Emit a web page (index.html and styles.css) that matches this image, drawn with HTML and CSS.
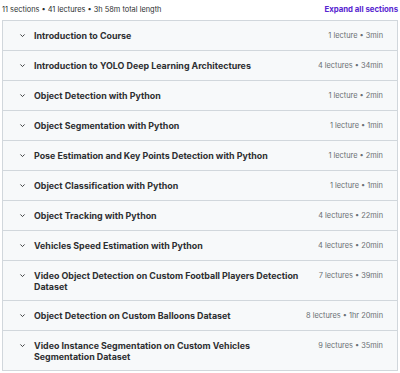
FILE: index.html
```html
<!DOCTYPE html>
<html lang="en">
<head>
    <meta charset="UTF-8">
    <title>Course content</title>
    <link rel="stylesheet" href="styles.css">
</head>
<body>
    <div class="curriculum">
        <div class="curriculum-header">
            <span class="summary">11 sections • 41 lectures • 3h 58m total length</span>
            <button class="expand-all">Expand all sections</button>
        </div>

        <div class="sections">
            <div class="section">
                <span class="chevron"><svg viewBox="0 0 10 10"><path d="M2 3.5 L5 6.5 L8 3.5"/></svg></span>
                <span class="section-title">Introduction to Course</span>
                <span class="section-meta">1 lecture • 3min</span>
            </div>
            <div class="section">
                <span class="chevron"><svg viewBox="0 0 10 10"><path d="M2 3.5 L5 6.5 L8 3.5"/></svg></span>
                <span class="section-title">Introduction to YOLO Deep Learning Architectures</span>
                <span class="section-meta">4 lectures • 34min</span>
            </div>
            <div class="section">
                <span class="chevron"><svg viewBox="0 0 10 10"><path d="M2 3.5 L5 6.5 L8 3.5"/></svg></span>
                <span class="section-title">Object Detection with Python</span>
                <span class="section-meta">1 lecture • 2min</span>
            </div>
            <div class="section">
                <span class="chevron"><svg viewBox="0 0 10 10"><path d="M2 3.5 L5 6.5 L8 3.5"/></svg></span>
                <span class="section-title">Object Segmentation with Python</span>
                <span class="section-meta">1 lecture • 1min</span>
            </div>
            <div class="section">
                <span class="chevron"><svg viewBox="0 0 10 10"><path d="M2 3.5 L5 6.5 L8 3.5"/></svg></span>
                <span class="section-title">Pose Estimation and Key Points Detection with Python</span>
                <span class="section-meta">1 lecture • 2min</span>
            </div>
            <div class="section">
                <span class="chevron"><svg viewBox="0 0 10 10"><path d="M2 3.5 L5 6.5 L8 3.5"/></svg></span>
                <span class="section-title">Object Classification with Python</span>
                <span class="section-meta">1 lecture • 1min</span>
            </div>
            <div class="section">
                <span class="chevron"><svg viewBox="0 0 10 10"><path d="M2 3.5 L5 6.5 L8 3.5"/></svg></span>
                <span class="section-title">Object Tracking with Python</span>
                <span class="section-meta">4 lectures • 22min</span>
            </div>
            <div class="section">
                <span class="chevron"><svg viewBox="0 0 10 10"><path d="M2 3.5 L5 6.5 L8 3.5"/></svg></span>
                <span class="section-title">Vehicles Speed Estimation with Python</span>
                <span class="section-meta">4 lectures • 20min</span>
            </div>
            <div class="section two-line">
                <span class="chevron"><svg viewBox="0 0 10 10"><path d="M2 3.5 L5 6.5 L8 3.5"/></svg></span>
                <span class="section-title">Video Object Detection on Custom Football Players Detection Dataset</span>
                <span class="section-meta">7 lectures • 39min</span>
            </div>
            <div class="section">
                <span class="chevron"><svg viewBox="0 0 10 10"><path d="M2 3.5 L5 6.5 L8 3.5"/></svg></span>
                <span class="section-title">Object Detection on Custom Balloons Dataset</span>
                <span class="section-meta">8 lectures • 1hr 20min</span>
            </div>
            <div class="section two-line">
                <span class="chevron"><svg viewBox="0 0 10 10"><path d="M2 3.5 L5 6.5 L8 3.5"/></svg></span>
                <span class="section-title">Video Instance Segmentation on Custom Vehicles Segmentation Dataset</span>
                <span class="section-meta">9 lectures • 35min</span>
            </div>
        </div>
    </div>
</body>
</html>
```

FILE: styles.css
```css
* {
    margin: 0;
    padding: 0;
    box-sizing: border-box;
}

body {
    background: #fff;
    font-family: 'Inter', 'Noto Sans', sans-serif;
    color: #2d2f31;
}

.curriculum {
    padding: 0 2px;
    width: 400px;
}

.curriculum-header {
    display: flex;
    justify-content: space-between;
    align-items: center;
    height: 20px;
    padding-top: 1px;
    padding-bottom: 3px;
}

.summary {
    font-size: 7.4px;
    color: #2d2f31;
}

.expand-all {
    background: none;
    border: none;
    font-family: inherit;
    font-size: 7.8px;
    font-weight: 700;
    color: #5624d0;
    cursor: pointer;
}

.sections {
    border: 1px solid #d1d7dc;
}

.section {
    display: flex;
    align-items: flex-start;
    height: 30px;
    padding: 9px 14px 0 16px;
    background: #f7f9fa;
    border-top: 1px solid #d1d7dc;
    line-height: 11px;
}

.section:first-child {
    height: 29px;
    border-top: none;
}

.section.two-line {
    height: 40px;
}

.chevron {
    display: flex;
    align-items: center;
    width: 7px;
    height: 11px;
    margin-right: 8px;
    flex-shrink: 0;
}

.chevron svg {
    width: 7px;
    height: 7px;
    fill: none;
    stroke: #2d2f31;
    stroke-width: 1.3;
}

.section-title {
    flex: 1;
    font-size: 8.9px;
    font-weight: 700;
    padding-right: 20px;
}

.section-meta {
    font-size: 7.4px;
    color: #6a6f73;
    white-space: nowrap;
}
```
